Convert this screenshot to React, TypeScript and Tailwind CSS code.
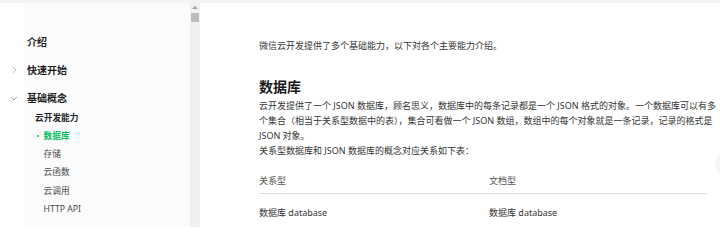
import React from "react";

const font = { fontFamily: '"Noto Sans", "Noto Sans CJK SC", sans-serif' };

function ChevronRight() {
  return (
    <svg width="5" height="8" viewBox="0 0 5 8" fill="none">
      <path d="M1 1l3 3-3 3" stroke="#b5b5b5" strokeWidth="0.9" />
    </svg>
  );
}
function ChevronDown() {
  return (
    <svg width="8" height="5" viewBox="0 0 8 5" fill="none">
      <path d="M1 1l3 3 3-3" stroke="#9a9a9a" strokeWidth="0.9" />
    </svg>
  );
}

export default function App() {
  const subItems = ["存储", "云函数", "云调用", "HTTP API"];
  return (
    <div
      className="w-[720px] h-[227px] overflow-hidden bg-white flex flex-col relative"
      style={font}
    >
      <div className="h-[3px] bg-[#f4f4f4] shrink-0" />
      <div className="flex flex-1 min-h-0">
        {/* Sidebar */}
        <div className="w-[190px] shrink-0 bg-[linear-gradient(to_right,#ffffff_24px,#fbfbfb_24px)] pt-[25px]">
          <div className="flex items-center h-[28px]">
            <div className="w-[27px] shrink-0" />
            <span className="text-[10px] font-semibold text-[#1f1f1f]">介绍</span>
          </div>
          <div className="flex items-center h-[28px]">
            <div className="w-[27px] shrink-0 flex justify-center pl-[1px]">
              <ChevronRight />
            </div>
            <span className="text-[10px] font-semibold text-[#1f1f1f]">快速开始</span>
          </div>
          <div className="flex items-center h-[28px]">
            <div className="w-[27px] shrink-0 flex justify-center">
              <ChevronDown />
            </div>
            <span className="text-[10px] font-semibold text-[#1f1f1f]">基础概念</span>
          </div>
          <div className="flex items-center h-[16px] -mt-[1px] pl-[35px]">
            <span className="text-[8.7px] font-bold text-[#222]">云开发能力</span>
          </div>
          <div className="flex items-center h-[18.4px] pl-[36.5px]">
            <span className="w-[2px] h-[2px] rounded-full bg-[#07c160] mr-[5px]" />
            <span className="text-[8.7px] font-bold text-[#07c160]">数据库</span>
          </div>
          {subItems.map((t) => (
            <div key={t} className="flex items-center h-[18.4px] pl-[43.5px]">
              <span className="text-[8.7px] text-[#4a4a4a]">{t}</span>
            </div>
          ))}
        </div>

        {/* Scrollbar */}
        <div className="w-[10px] shrink-0 bg-[#f0f0f0] flex flex-col items-center">
          <div className="mt-[3px] w-0 h-0 border-l-[3px] border-r-[3px] border-b-[3px] border-l-transparent border-r-transparent border-b-[#a3a3a3]" />
          <div className="mt-[4px] w-[8px] h-[9px] bg-[#bdbdbd]" />
        </div>

        {/* Content */}
        <div className="flex-1 pl-[59px] pt-[35px] text-[9px] leading-[15px] text-[#353535]">
          <p>微信云开发提供了多个基础能力，以下对各个主要能力介绍。</p>
          <h2 className="mt-[23.5px] text-[14px] leading-[20px] font-bold text-[#1a1a1a]">数据库</h2>
          <p className="mt-[1.5px] w-[458px]">
            云开发提供了一个 JSON 数据库，顾名思义，数据库中的每条记录都是一个 JSON 格式的对象。一个数据库可以有多个集合（相当于关系型数据中的表），集合可看做一个 JSON 数组，数组中的每个对象就是一条记录，记录的格式是 JSON 对象。
          </p>
          <p>关系型数据库和 JSON 数据库的概念对应关系如下表：</p>
          <div className="mt-[14.5px] w-[448px]">
            <div className="flex border-b border-[#dcdcdc] pb-[5.5px] text-[#555]">
              <div className="w-[230px]">关系型</div>
              <div className="flex-1">文档型</div>
            </div>
            <div className="flex pt-[11px]">
              <div className="w-[230px]">数据库 database</div>
              <div className="flex-1">数据库 database</div>
            </div>
          </div>
        </div>
      </div>

      {/* Floating button (partially off-screen) */}
      <div className="absolute left-[715px] top-[152px] w-[25px] h-[25px] rounded-full bg-[#f5f5f5]" />
    </div>
  );
}
